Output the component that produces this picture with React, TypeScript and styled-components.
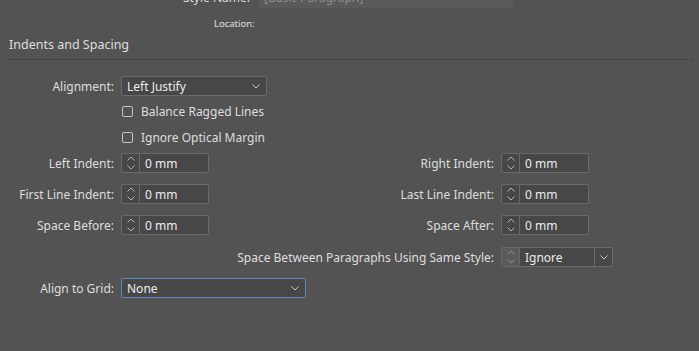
import React from 'react';
import styled, {createGlobalStyle} from "styled-components";

const GlobalStyle = createGlobalStyle`
  html, body {
    margin: 0;
    padding: 0;
    background: #535353;
    overflow: hidden;
  }
  body {
    font-family: "Noto Sans", "Open Sans", sans-serif;
    font-size: 12px;
    color: #dedede;
  }
`

const Chevron = ({up}: {up?: boolean}) => (
    <svg width="8" height="5" viewBox="0 0 8 5">
        <path d={up ? "M0.5 4.5 L4 1 L7.5 4.5" : "M0.5 0.5 L4 4 L7.5 0.5"} fill="none" stroke="currentColor" strokeWidth="1"/>
    </svg>
);

const Stepper = ({disabled}: {disabled?: boolean}) => (
    <StyledStepper $disabled={disabled}>
        <Chevron up/>
        <Chevron/>
    </StyledStepper>
);

const SpinField = ({value}: {value: string}) => (
    <StyledSpinField>
        <Stepper/>
        <FieldText>{value}</FieldText>
    </StyledSpinField>
);

const Select = ({value, width, focused}: {value: string, width: number, focused?: boolean}) => (
    <StyledSelect $width={width} $focused={focused}>
        <FieldText>{value}</FieldText>
        <Chevron/>
    </StyledSelect>
);

const Checkbox = ({label}: {label: string}) => (
    <CheckRow>
        <Box/>
        <span>{label}</span>
    </CheckRow>
);

export default function App() {
    return (
        <Page>
            <GlobalStyle/>
            <Header>
                <NameRow>
                    <HeaderLabel>Style Name:</HeaderLabel>
                    <NameField>[Basic Paragraph]</NameField>
                </NameRow>
                <LocationRow>
                    <LocationLabel>Location:</LocationLabel>
                </LocationRow>
            </Header>

            <SectionTitle>Indents and Spacing</SectionTitle>
            <Divider/>

            <Form>
                <Row $gap={0}>
                    <Label>Alignment:</Label>
                    <Select value="Left Justify" width={146}/>
                </Row>
                <Row $gap={5}>
                    <Label/>
                    <Checkbox label="Balance Ragged Lines"/>
                </Row>
                <Row $gap={6}>
                    <Label/>
                    <Checkbox label="Ignore Optical Margin"/>
                </Row>

                <PairRow $gap={6}>
                    <Label>Left Indent:</Label>
                    <SpinField value="0 mm"/>
                    <RightLabel>Right Indent:</RightLabel>
                    <SpinField value="0 mm"/>
                </PairRow>
                <PairRow $gap={11}>
                    <Label>First Line Indent:</Label>
                    <SpinField value="0 mm"/>
                    <RightLabel>Last Line Indent:</RightLabel>
                    <SpinField value="0 mm"/>
                </PairRow>
                <PairRow $gap={11}>
                    <Label>Space Before:</Label>
                    <SpinField value="0 mm"/>
                    <RightLabel>Space After:</RightLabel>
                    <SpinField value="0 mm"/>
                </PairRow>

                <Row $gap={12}>
                    <WideLabel>Space Between Paragraphs Using Same Style:</WideLabel>
                    <Combo>
                        <Stepper disabled/>
                        <FieldText>Ignore</FieldText>
                        <ComboButton><Chevron/></ComboButton>
                    </Combo>
                </Row>

                <Row $gap={11}>
                    <Label>Align to Grid:</Label>
                    <Select value="None" width={185} focused/>
                </Row>
            </Form>
        </Page>
    );
}

const Page = styled.div`
  width: 699px;
  height: 351px;
  overflow: hidden;
`

const Header = styled.div`
  margin-top: -13px;
`

const NameRow = styled.div`
  display: flex;
  align-items: center;
  height: 21px;
`

const HeaderLabel = styled.div`
  text-align: right;
  padding-right: 8px;
  box-sizing: border-box;
  width: 258px;
`

const NameField = styled.div`
  width: 255px;
  height: 21px;
  background: #5a5a5a;
  color: #8e8e8e;
  padding-left: 6px;
  box-sizing: border-box;
  line-height: 21px;
`

const LocationRow = styled.div`
  display: flex;
  height: 14px;
  margin-top: 9px;
`

const LocationLabel = styled.div`
  margin-left: 214px;
  font-size: 9.5px;
  line-height: 14px;
  color: #e0e0e0;
`

const SectionTitle = styled.div`
  margin-top: 5px;
  padding-left: 9px;
  height: 17px;
  line-height: 17px;
  font-size: 12.5px;
`

const Divider = styled.div`
  margin: 6px 6px 0 8px;
  height: 1px;
  background: #474747;
`

const Form = styled.div`
  display: flex;
  flex-direction: column;
  padding-top: 16px;
`

const Row = styled.div<{$gap: number}>`
  display: flex;
  align-items: center;
  height: 20px;
  margin-top: ${p => p.$gap}px;
  gap: 7px;
`

const PairRow = styled.div<{$gap: number}>`
  display: grid;
  grid-template-columns: 114px 88px 278px 88px;
  column-gap: 7px;
  align-items: center;
  height: 20px;
  margin-top: ${p => p.$gap}px;
`

const Label = styled.div`
  width: 114px;
  text-align: right;
  white-space: nowrap;
`

const RightLabel = styled.div`
  text-align: right;
  white-space: nowrap;
`

const WideLabel = styled.div`
  width: 494px;
  text-align: right;
  white-space: nowrap;
`

const FieldText = styled.span`
  flex: 1;
  padding-left: 5px;
  color: #ececec;
  white-space: nowrap;
`

const StyledSelect = styled.div<{$width: number, $focused?: boolean}>`
  display: flex;
  align-items: center;
  width: ${p => p.$width}px;
  height: 20px;
  box-sizing: border-box;
  border: 1px solid ${p => p.$focused ? "#5a87bd" : "#6a6a6a"};
  border-radius: 2px;
  background: #474747;
  color: #c8c8c8;
  padding-right: 6px;

  svg {
    flex-shrink: 0;
  }
`

const StyledSpinField = styled.div`
  display: flex;
  align-items: center;
  width: 88px;
  height: 20px;
  box-sizing: border-box;
  border: 1px solid #6a6a6a;
  border-radius: 2px;
  background: #474747;
`

const StyledStepper = styled.div<{$disabled?: boolean}>`
  display: flex;
  flex-direction: column;
  align-items: center;
  justify-content: center;
  gap: 4px;
  width: 17px;
  height: 100%;
  flex-shrink: 0;
  border-right: 1px solid #6a6a6a;
  background: ${p => p.$disabled ? "#5a5a5a" : "transparent"};
  color: ${p => p.$disabled ? "#8a8a8a" : "#b4b4b4"};
`

const Combo = styled.div`
  display: flex;
  align-items: center;
  width: 112px;
  height: 20px;
  box-sizing: border-box;
  border: 1px solid #6a6a6a;
  border-radius: 2px;
  background: #474747;
`

const ComboButton = styled.div`
  display: flex;
  align-items: center;
  justify-content: center;
  width: 17px;
  height: 100%;
  border-left: 1px solid #6a6a6a;
  color: #c8c8c8;
`

const CheckRow = styled.div`
  display: flex;
  align-items: center;
  gap: 8px;
  padding-left: 1px;
  white-space: nowrap;
`

const Box = styled.div`
  width: 11px;
  height: 11px;
  box-sizing: border-box;
  border: 1px solid #c4c4c4;
  border-radius: 2px;
`
